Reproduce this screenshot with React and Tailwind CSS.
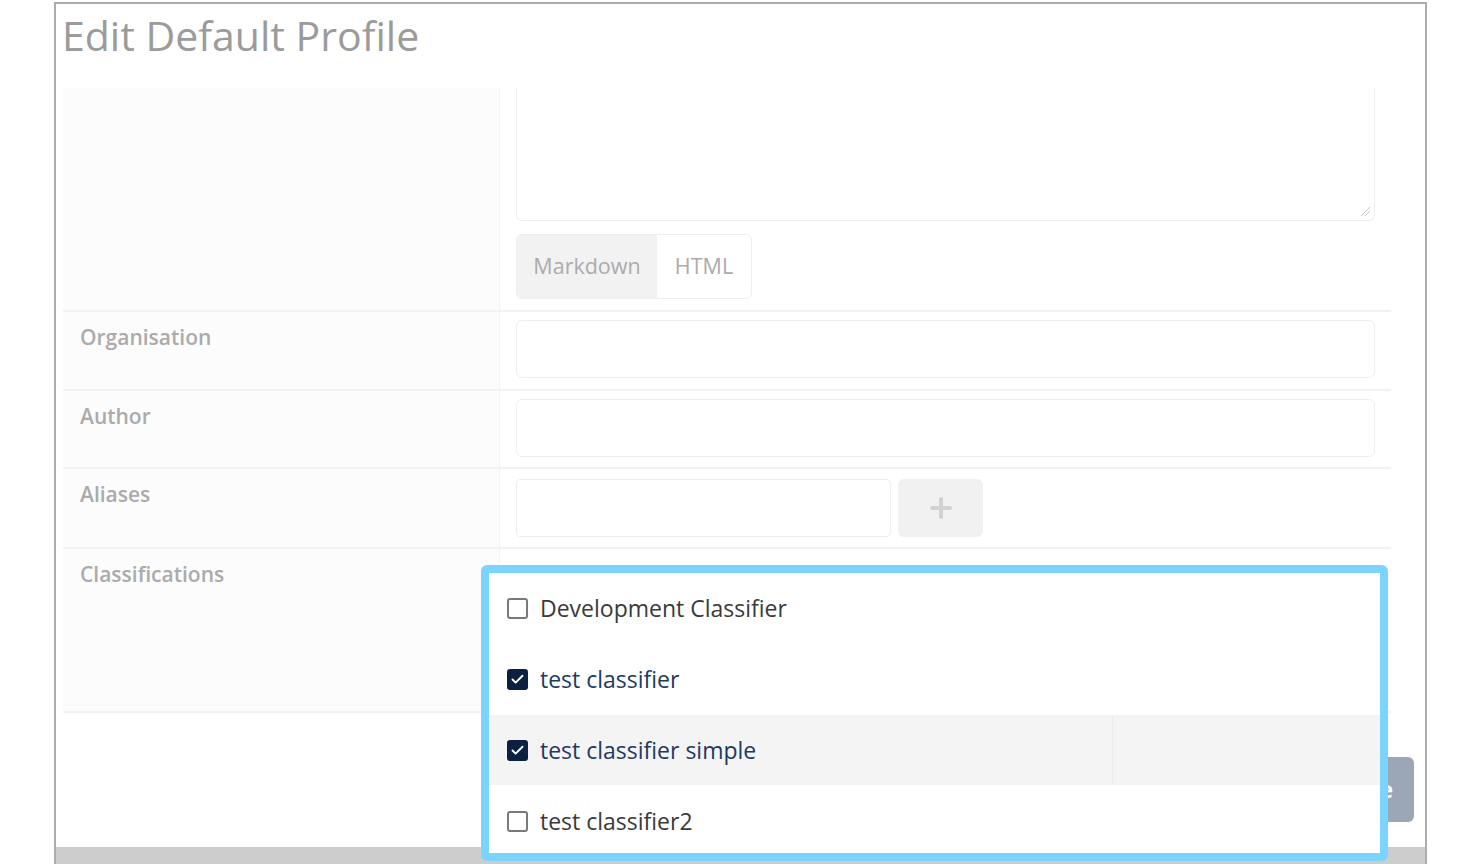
import { Check } from 'lucide-react';

const font = { fontFamily: '"Open Sans", Lato, sans-serif' };

function Row({ label, children, className = '' }) {
    return (
        <div className={`flex border-b-2 border-[#f2f2f2] ${className}`}>
            <div className="w-[437px] shrink-0 bg-[#fcfcfc] border-r border-[#f3f3f3] px-[17px] pt-[10px] text-[21px] font-semibold text-[#ababab]">
                {label}
            </div>
            <div className="flex-1 px-4">{children}</div>
        </div>
    );
}

function Box({ checked }) {
    return checked ? (
        <span className="flex h-[21px] w-[21px] items-center justify-center rounded-[3px] bg-[#0c2142]">
            <Check className="h-[15px] w-[15px] text-white" strokeWidth={3} />
        </span>
    ) : (
        <span className="h-[21px] w-[21px] rounded-[3px] border-2 border-[#7a7a7a] bg-white" />
    );
}

const items = [
    { name: 'Development Classifier', checked: false, h: 'h-[70px]' },
    { name: 'test classifier', checked: true, h: 'h-[72px]' },
    { name: 'test classifier simple', checked: true, hover: true, h: 'h-[70px]' },
    { name: 'test classifier2', checked: false, h: 'h-[68px] pt-[4px]' },
];

export default function App() {
    return (
        <div className="relative h-[864px] w-[1481px] overflow-hidden bg-white" style={font}>
            <div className="ml-[54px] mt-[2px] flex h-[862px] w-[1373px] flex-col border-x-2 border-t-2 border-[#acacac]">
                <h1 className="h-[84px] shrink-0 pl-[6px] pt-[2px] text-[41px] leading-[58px] text-[#9b9b9b]">
                    Edit Default Profile
                </h1>

                <div className="ml-[7px] w-[1328px]">
                    <Row label="" className="h-[224px]">
                        <div className="relative h-[133px] rounded-b-md border-x border-b border-[#efefef]">
                            <svg className="absolute bottom-[3px] right-[3px]" width="11" height="11" viewBox="0 0 11 11">
                                <path d="M1 10 L10 1 M5 10 L10 5" stroke="#c4c4c4" strokeWidth="1" />
                            </svg>
                        </div>
                        <div className="mt-[13px] flex h-[65px] w-[236px] overflow-hidden rounded-md border border-[#eeeeee] text-[21.5px] text-[#ababab]">
                            <div className="flex w-[140px] items-center justify-center bg-[#f2f2f2]">Markdown</div>
                            <div className="flex flex-1 items-center justify-center bg-white">HTML</div>
                        </div>
                    </Row>
                    <Row label="Organisation" className="h-[79px]">
                        <div className="mt-[8px] h-[58px] rounded-md border border-[#efefef]" />
                    </Row>
                    <Row label="Author" className="h-[78px]">
                        <div className="mt-[8px] h-[58px] rounded-md border border-[#efefef]" />
                    </Row>
                    <Row label="Aliases" className="h-[80px]">
                        <div className="mt-[10px] flex gap-[7px]">
                            <div className="h-[58px] w-[375px] rounded-sm border border-[#efefef]" />
                            <div className="relative h-[58px] w-[85px] rounded-md bg-[#f1f1f1]">
                                <span className="absolute left-1/2 top-1/2 h-[4px] w-[22px] -translate-x-1/2 -translate-y-1/2 rounded-full bg-[#d2d2d2]" />
                                <span className="absolute left-1/2 top-1/2 h-[22px] w-[4px] -translate-x-1/2 -translate-y-1/2 rounded-full bg-[#d2d2d2]" />
                            </div>
                        </div>
                    </Row>
                    <Row label="Classifications" className="h-[164px] border-b-0">
                        <div />
                    </Row>
                </div>

                <div className="flex flex-1 items-start justify-end pr-[11px] pt-[44px]">
                    <button className="h-[65px] rounded-md bg-[#9ba7b7] px-[21px] text-[23px] font-bold text-white">
                        Save
                    </button>
                </div>
                <div className="h-[17px] shrink-0 bg-[#cdcdcd]" />
            </div>

            <div className="absolute left-[481px] top-[565px] h-[296px] w-[907px] overflow-hidden rounded-md border-[8px] border-[#7bd4fd] bg-white">
                {items.map((it) => (
                    <div
                        key={it.name}
                        className={`flex ${it.h} items-center ${it.hover ? 'bg-[#f4f4f4]' : ''}`}
                    >
                        <div className={`flex h-full items-center gap-[12px] pl-[18px] ${it.hover ? 'w-[624px] border-r border-[#ebebeb]' : ''}`}>
                            <Box checked={it.checked} />
                            <span className={`text-[23px] ${it.checked ? 'text-[#1f3a5f]' : 'text-[#3a3a3a]'}`}>
                                {it.name}
                            </span>
                        </div>
                    </div>
                ))}
            </div>
        </div>
    );
}
